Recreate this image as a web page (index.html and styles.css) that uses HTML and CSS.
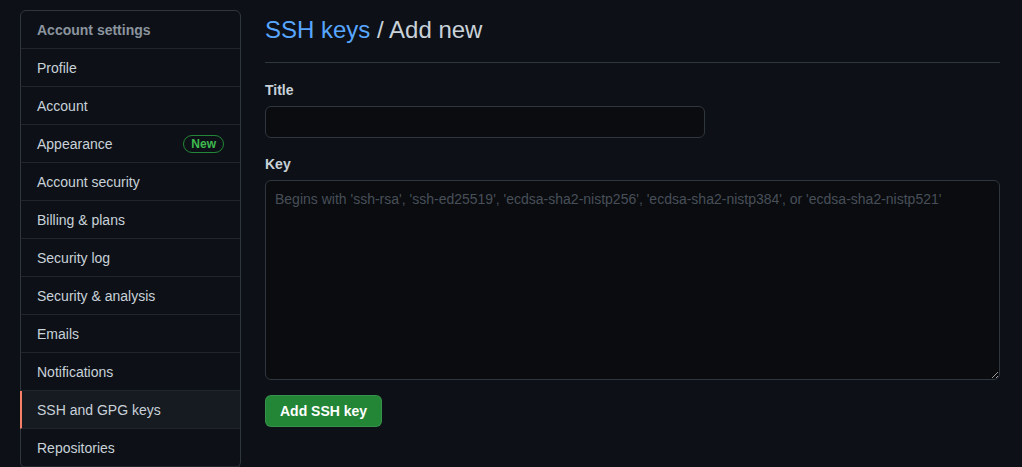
FILE: index.html
```html
<!DOCTYPE html>
<html lang="en">
<head>
  <meta charset="UTF-8" />
  <title>Add new SSH key</title>
  <link rel="stylesheet" href="styles.css">
</head>
<body>
  <div class="layout">
    <nav class="menu">
      <div class="menu-heading">Account settings</div>
      <a class="menu-item" href="#">Profile</a>
      <a class="menu-item" href="#">Account</a>
      <a class="menu-item" href="#">Appearance <span class="badge">New</span></a>
      <a class="menu-item" href="#">Account security</a>
      <a class="menu-item" href="#">Billing &amp; plans</a>
      <a class="menu-item" href="#">Security log</a>
      <a class="menu-item" href="#">Security &amp; analysis</a>
      <a class="menu-item" href="#">Emails</a>
      <a class="menu-item" href="#">Notifications</a>
      <a class="menu-item selected" href="#">SSH and GPG keys</a>
      <a class="menu-item" href="#">Repositories</a>
    </nav>

    <main class="content">
      <div class="subhead">
        <h2><a href="#">SSH keys</a> / Add new</h2>
      </div>
      <form class="key-form">
        <label for="title">Title</label>
        <input type="text" id="title" class="title-input">
        <label for="key">Key</label>
        <textarea id="key" placeholder="Begins with 'ssh-rsa', 'ssh-ed25519', 'ecdsa-sha2-nistp256', 'ecdsa-sha2-nistp384', or 'ecdsa-sha2-nistp521'"></textarea>
        <div class="actions">
          <button type="button" class="btn-primary">Add SSH key</button>
        </div>
      </form>
    </main>
  </div>
</body>
</html>
```

FILE: styles.css
```css
* {
  box-sizing: border-box;
}

body {
  margin: 0;
  background: #0d1117;
  color: #c9d1d9;
  font-family: 'Liberation Sans', Arial, sans-serif;
  font-size: 14px;
  overflow: hidden;
}

.layout {
  display: flex;
  gap: 24px;
  padding: 10px 22px 0 20px;
}

.menu {
  width: 221px;
  flex-shrink: 0;
  border: 1px solid #30363d;
  border-radius: 6px;
  display: flex;
  flex-direction: column;
}

.menu-heading {
  height: 38px;
  padding: 0 16px;
  display: flex;
  align-items: center;
  color: #8b949e;
  font-weight: 600;
  border-bottom: 1px solid #21262d;
}

.menu-item {
  height: 38px;
  padding: 0 16px 0 15px;
  display: flex;
  align-items: center;
  justify-content: space-between;
  color: #c9d1d9;
  text-decoration: none;
  border-bottom: 1px solid #21262d;
  border-left: 2px solid transparent;
  margin-left: -1px;
}

.menu-item.selected {
  background: #161b22;
  border-left-color: #f78166;
}

.badge {
  font-size: 12px;
  font-weight: 600;
  color: #3fb950;
  border: 1px solid #238636;
  border-radius: 2em;
  padding: 0 7px;
  line-height: 16px;
}

.content {
  flex: 1;
}

.subhead {
  border-bottom: 1px solid #30363d;
  padding: 1px 0 13px;
}

.subhead h2 {
  margin: 0;
  font-size: 24px;
  font-weight: 400;
  line-height: 38px;
}

.subhead a {
  color: #58a6ff;
  text-decoration: none;
}

.key-form {
  display: flex;
  flex-direction: column;
  padding-top: 17px;
}

.key-form label {
  font-weight: 600;
  line-height: 20px;
  margin-bottom: 6px;
}

.title-input {
  width: 440px;
  height: 32px;
  margin-bottom: 16px;
}

.title-input, textarea {
  background: #0a0c10;
  border: 1px solid #30363d;
  border-radius: 6px;
  color: #c9d1d9;
  font-family: inherit;
  font-size: 14px;
  padding: 5px 12px;
}

textarea {
  height: 200px;
  resize: vertical;
  padding: 10px 9px;
}

textarea::placeholder {
  color: #484f58;
}

.actions {
  padding-top: 15px;
}

.btn-primary {
  height: 32px;
  padding: 0 14px;
  background: #238636;
  color: #ffffff;
  border: 1px solid rgba(240, 246, 252, 0.1);
  border-radius: 6px;
  font-family: inherit;
  font-size: 14px;
  font-weight: 600;
  cursor: pointer;
}
```
